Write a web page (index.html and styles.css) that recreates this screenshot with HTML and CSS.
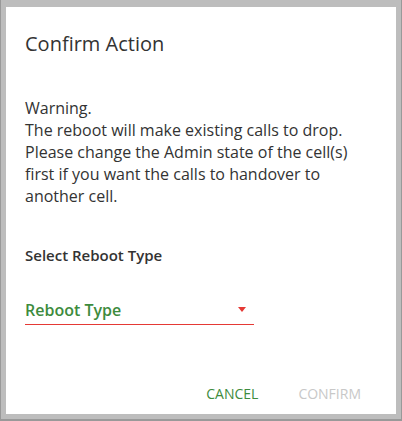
FILE: index.html
```html
<!DOCTYPE html>
<html>
<head>
<meta charset="utf-8">
<link rel="stylesheet" href="styles.css">
</head>
<body>
<div class="backdrop">
  <div class="dialog">
    <h2 class="title">Confirm Action</h2>
    <p class="message">Warning.<br>The reboot will make existing calls to drop.<br>Please change the Admin state of the cell(s)<br>first if you want the calls to handover to<br>another cell.</p>
    <div class="label">Select Reboot Type</div>
    <div class="select">
      <span class="select-value">Reboot Type</span>
      <span class="caret"></span>
    </div>
    <div class="actions">
      <button class="btn btn-cancel">CANCEL</button>
      <button class="btn btn-confirm">CONFIRM</button>
    </div>
  </div>
</div>
</body>
</html>
```
FILE: styles.css
```css
* { box-sizing: border-box; }
html, body { margin: 0; padding: 0; }
body {
  width: 402px;
  height: 421px;
  font-family: "Open Sans", "Noto Sans", sans-serif;
  background: #bdbdbd;
}
.backdrop {
  width: 402px;
  height: 421px;
  padding: 7px 5px 5px 5px;
  border-left: 1px solid #999;
  border-right: 1px solid #999;
  border-bottom: 2px solid #999;
}
.dialog {
  background: #fff;
  height: 100%;
  padding: 0 0 0 19px;
  display: flex;
  flex-direction: column;
}
.title {
  margin: 24px 0 0 0;
  font-size: 20px;
  font-weight: 400;
  color: #333;
  line-height: 26px;
}
.message {
  margin: 40px 0 0 0;
  font-size: 16px;
  line-height: 22px;
  color: #333;
}
.label {
  margin-top: 38px;
  font-size: 15px;
  font-weight: 600;
  color: #333;
  line-height: 20px;
}
.select {
  margin-top: 34px;
  width: 229px;
  border-bottom: 1px solid #e53935;
  display: flex;
  align-items: center;
  justify-content: space-between;
  padding: 0 8px 3px 0;
}
.select-value {
  font-size: 16px;
  font-weight: 600;
  color: #3d8b3d;
  line-height: 22px;
}
.caret {
  width: 0;
  height: 0;
  border-left: 4px solid transparent;
  border-right: 4px solid transparent;
  border-top: 5px solid #e53935;
  margin-top: -2px;
}
.actions {
  margin-top: auto;
  display: flex;
  justify-content: flex-end;
  gap: 40px;
  padding: 0 35px 11px 0;
}
.btn {
  background: none;
  border: none;
  padding: 0;
  font-family: "Open Sans", "Noto Sans", sans-serif;
  font-size: 14px;
  line-height: 18px;
  cursor: pointer;
}
.btn-cancel { color: #3d8b3d; }
.btn-confirm { color: #c8c8c8; }
```
